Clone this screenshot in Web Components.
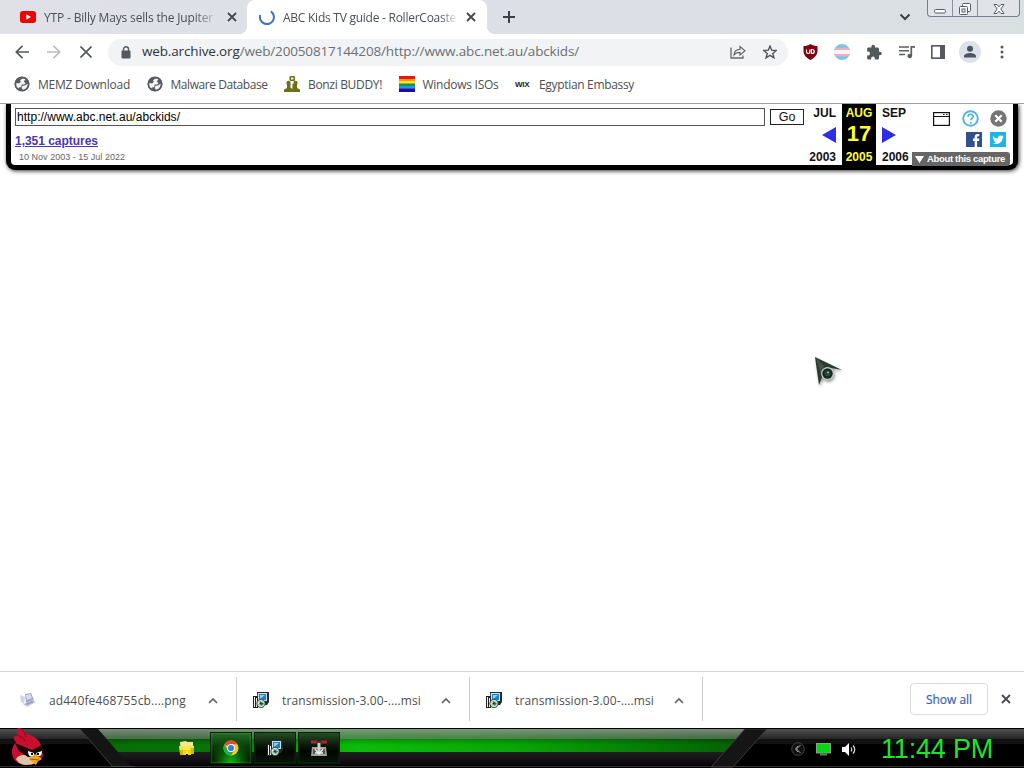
<!DOCTYPE html>
<html lang="en">
<head>
<meta charset="utf-8">
<title>ABC Kids TV guide - RollerCoaster</title>
<style>
  body {
    margin: 0;
    width: 1024px;
    height: 768px;
    overflow: hidden;
    display: flex;
    flex-direction: column;
    background: #fff;
    font: 12px "Open Sans", "Noto Sans", sans-serif;
    color: #4b4f53;
  }
  .page { flex: 1; min-height: 0; }
</style>
</head>
<body>

<tab-strip>
  <browser-tab icon="youtube" ancho="169">YTP - Billy Mays sells the Jupiter</browser-tab>
  <browser-tab icon="spinner" ancho="173" active>ABC Kids TV guide - RollerCoaste</browser-tab>
</tab-strip>

<tool-bar></tool-bar>

<bookmarks-bar>
  <book-mark icon="globe" ancho="92">MEMZ Download</book-mark>
  <book-mark icon="globe" ancho="97">Malware Database</book-mark>
  <book-mark icon="bonzi" ancho="74">Bonzi BUDDY!</book-mark>
  <book-mark icon="rainbow" ancho="76">Windows ISOs</book-mark>
  <book-mark icon="wix" ancho="95">Egyptian Embassy</book-mark>
</bookmarks-bar>

<wayback-bar></wayback-bar>
<main class="page"><mouse-pointer></mouse-pointer></main>

<download-shelf>
  <download-item icon="picture" ancho="137">ad440fe468755cb....png</download-item>
  <download-item icon="msi" ancho="139">transmission-3.00-....msi</download-item>
  <download-item icon="msi" ancho="139">transmission-3.00-....msi</download-item>
</download-shelf>

<task-bar></task-bar>

<script>
/* icons: name -> [width, height, svg content] */
const msi = `<path d="M0 4h5v12H0z" fill="#222"/><path d="M1 5h1v10H1zM3 6h1v9H3z" fill="#eee"/>
  <path d="M4 0h12v10l-2 3H5z" fill="#222b35"/><path d="M5 1h9v8H5z" fill="#d6dfe5"/><path d="M6 2h7v6H6z" fill="#1784cf"/>
  <path d="M7 3h5L7 7z" fill="#8bd2f5"/><circle cx="8" cy="11.5" r="4.2" fill="#b8cdbf" stroke="#253329" stroke-width=".8"/>
  <path d="M8 8v7M5 11h6" stroke="#fff" stroke-width=".8"/><path d="M7 9l4 2.5L8 14z" fill="#15864a"/><circle cx="7.6" cy="11.5" r="1.1" fill="#222"/>`;

const icons = {
  youtube: [16, 12, `<rect width="16" height="12" rx="3" fill="#f00000"/><path d="M6.3 3.3v5.4L11 6z" fill="#fff"/>`],
  spinner: [16, 16, `<path d="M11.800 2.300A7 7 0 1 1 1.2 6" fill="none" stroke="#3b74cf" stroke-width="2"/>`],
  close: [10, 10, `<path d="M1 1l8 8M9 1L1 9" stroke="#45484c" stroke-width="1.8"/>`],
  plus: [12, 12, `<path d="M6 0v12M0 6h12" stroke="#3c4043" stroke-width="2"/>`],
  chevron: [12, 8, `<path d="M1.5 1.5L6 6l4.500-4.500" fill="none" stroke="#3c4043" stroke-width="2"/>`],
  up: [10, 7, `<path d="M1 6l4-4 4 4" fill="none" stroke="#5f6368" stroke-width="1.7"/>`],
  back: [14, 14, `<path d="M14 7H1.500M7.500 .8L1.300 7l6.200 6.200" fill="none" stroke="#55585c" stroke-width="1.7"/>`],
  forward: [14, 14, `<path d="M0 7h12.500M6.500 .8L12.700 7l-6.200 6.200" fill="none" stroke="#bcbec1" stroke-width="1.7"/>`],
  stop: [12, 12, `<path d="M.5 .5l11 11M11.500 .5l-11 11" stroke="#55585c" stroke-width="1.7"/>`],
  lock: [10, 13, `<rect x=".5" y="4.500" width="9" height="8" rx="1" fill="#55585c"/><path d="M2.500 5V3.300a2.500 2.500 0 0 1 5 0V5" fill="none" stroke="#55585c" stroke-width="1.400"/>`],
  share: [16, 14, `<path d="M1 2.500V13h12v-2.500" fill="none" stroke="#65686c" stroke-width="1.300"/><path d="M4 10c.3-3.600 2.300-5.600 6-5.600V1.500l5 4.300-5 4.200V7.300C7.500 7.300 5.500 8 4 10z" fill="none" stroke="#65686c" stroke-width="1.200"/>`],
  star: [14, 14, `<path d="M7 1l1.700 4.200 4.500.3-3.400 2.900 1.100 4.400L7 10.400l-3.900 2.400 1.100-4.400L.8 5.500l4.500-.3z" fill="none" stroke="#515458" stroke-width="1.400"/>`],
  ublock: [15, 16, `<path d="M7.500 0C9.500 1.400 12 2 14.500 2v5c0 4-3 7-7 9-4-2-7-5-7-9V2C3 2 5.500 1.400 7.500 0z" fill="#800010"/><path d="M3.500 5.500v2.300a1.700 1.700 0 0 0 3.400 0V5.500" fill="none" stroke="#fff" stroke-width="1.200"/><path d="M8.400 5.500h.8a2 2 0 1 1 0 4h-.8z" fill="none" stroke="#fff" stroke-width="1.200"/>`],
  flag: [16, 16, `<clipPath id="c"><circle cx="8" cy="8" r="8"/></clipPath><g clip-path="url(#c)"><path d="M0 0h16v16H0z" fill="#76c8e5"/><path d="M0 3.800h16v8.400H0z" fill="#f4acc0"/><path d="M0 6h16v4H0z" fill="#f6f6f9"/></g>`],
  puzzle: [16, 16, `<path d="M14 7.700h-1V5a1.400 1.400 0 0 0-1.400-1.400H9V2.500a1.800 1.800 0 0 0-3.600 0v1.100H2.500A1.400 1.400 0 0 0 1.100 5v2.600h1a1.900 1.900 0 0 1 0 3.800h-1v2.700a1.400 1.400 0 0 0 1.400 1.400h2.600v-1a1.900 1.900 0 0 1 3.800 0v1h2.700a1.400 1.400 0 0 0 1.400-1.400v-2.800h1a1.800 1.800 0 0 0 0-3.600z" fill="#55585c"/>`],
  queue: [17, 14, `<path d="M1 2h10M1 5.700h10M1 9.400h6" stroke="#5b5e62" stroke-width="1.500"/><path d="M13.300 11V1.800H17" fill="none" stroke="#5b5e62" stroke-width="1.700"/><circle cx="11.700" cy="11" r="2.300" fill="#5b5e62"/>`],
  panel: [14, 14, `<rect x=".8" y=".8" width="12.400" height="12.400" fill="none" stroke="#55585c" stroke-width="1.600"/><path d="M9 1h4.500v12H9z" fill="#55585c"/>`],
  avatar: [22, 22, `<circle cx="11" cy="11" r="11" fill="#dee1e8"/><circle cx="11" cy="7.800" r="3" fill="#4b5462"/><path d="M5 16.500v-1.300c0-2 3.800-3.200 6-3.200s6 1.200 6 3.200v1.300z" fill="#4b5462"/>`],
  menu: [4, 14, `<g fill="#55585c"><circle cx="2" cy="2" r="1.500"/><circle cx="2" cy="7" r="1.500"/><circle cx="2" cy="12" r="1.500"/></g>`],
  globe: [16, 16, `<circle cx="8" cy="8" r="7.300" fill="#595c60"/><path d="M9 2.200L6 4.200l.8 1.600-1.300 1.400H1.800c-.6 3 .6 4.600 2 5.800l1.200-1.500 2.200-.6.5-2.300h2.500l1.300-1.400-1.700-1.600L11.600 3z" fill="#f4f5f6"/><path d="M13.800 7.500l-2.500 1.700-3 .8-.6 2 1.300 2c3-.5 5-3 4.800-6.500z" fill="#f4f5f6"/><circle cx="8" cy="8" r="6.700" fill="none" stroke="#595c60" stroke-width="1.700"/>`],
  bonzi: [16, 16, `<g fill="#6f701a"><rect x="5.500" y="0" width="5.500" height="5" rx="1.300"/><circle cx="4.500" cy="7" r="2.200"/><circle cx="11.500" cy="7" r="2.200"/><path d="M3 8h3.500v4H8V8h5v4l3 1.500V16H0v-2.500L3 12z"/></g><path d="M7 1.500h2.500v2H7z" fill="#f3f3df"/><path d="M8 6v7" stroke="#fff" stroke-width=".8"/>`],
  rainbow: [16, 16, `<path d="M0 0h16v3H0z" fill="#e01b12"/><path d="M0 3h16v2.500H0z" fill="#ff9500"/><path d="M0 5.500h16V8H0z" fill="#f5e61d"/><path d="M0 7.500h16V10H0z" fill="#16934f"/><path d="M0 10h16v2.300H0z" fill="#189de2"/><path d="M0 12.300h16V16H0z" fill="#1d09b5"/>`],
  helpme: [17, 17, `<circle cx="8.500" cy="8.500" r="7.300" fill="#fff" stroke="#50b3e0" stroke-width="1.900"/><path d="M6 6.800c0-3.200 5.200-3.200 5.200-.2 0 1.900-2.500 1.800-2.500 3.700M8.700 12v1.700" fill="none" stroke="#50b3e0" stroke-width="1.700"/>`],
  closeround: [17, 17, `<circle cx="8.500" cy="8.500" r="8.200" fill="#757575"/><path d="M5.300 5.300l6.400 6.400M11.700 5.300l-6.400 6.400" stroke="#fff" stroke-width="2.200"/>`],
  frame: [17, 14, `<rect x=".6" y=".6" width="15.800" height="12.800" fill="#fff" stroke="#111" stroke-width="1.200"/><path d="M0 4.500h17M10 2.500h1.500M13 2.500h1.500" stroke="#111" stroke-width="1.200"/>`],
  facebook: [16, 15, `<path d="M0 0h16v15H0z" fill="#31508e"/><path d="M8.700 15V9H7V6.600h1.700V5c0-2 1-3 3-3h1.600v2.300h-1.100c-.9 0-1.100.4-1.100 1.100v1.200h2.200L13 9h-1.900v6z" fill="#fff"/>`],
  twitter: [16, 15, `<path d="M0 0h16v15H0z" fill="#20b5e8"/><path d="M3 4.200c1.500 1.600 3 2.200 4.900 2.300C7.500 4 10.200 2.700 11.900 4l1.600-.5-.8 1.300 1.100.1-1.200 1.200c0 5.200-5.600 7.200-9.800 5 1.400 0 2.200-.2 3.200-.9-1.100-.2-1.800-.8-2-1.600h.9C3.700 8.100 3.100 7.300 3.200 6.500l.8.200C3 5.900 2.600 5.100 3 4.200z" fill="#fff"/>`],
  left: [14, 16, `<path d="M14 0v16L0 8z" fill="#2d2de8"/>`],
  right: [14, 16, `<path d="M0 0v16l14-8z" fill="#2d2de8"/>`],
  down: [9, 7, `<path d="M0 0h9L4.500 7z" fill="#fff"/>`],
  picture: [16, 16, `<path d="M0 3l5 2-1 7 2 1-5-3z" fill="#d3d6e0"/><path d="M5 2l6-1 3 7-8 3z" fill="#a4a8c4"/><path d="M6 3l4-1 2 4-5 2z" fill="#d8dcec"/><path d="M3 12l10-4 3 2-9 5z" fill="#c9cddc"/><path d="M5 12l7-3 2 1-7 3z" fill="#9599b2"/>`],
  msi: [16, 16, msi],
  folder: [16, 16, `<path d="M1 2l6-1 1 1h6v12H2z" fill="#f4e797"/><path d="M0 6h15v8H1z" fill="#eee07c"/><path d="M3 8c0-3 9-3 9 0v7H9v-4H7v4H3z" fill="#f3d800"/><path d="M4 7l4-2 3 2v3H4z" fill="#ffec4d"/><path d="M1 10h3v5H1zM12 8h3v6h-3z" fill="#cbb61d"/>`],
  chrome: [16, 16, `<circle cx="8" cy="8" r="7.500" fill="#fbc817"/><path d="M8 8L1.500 4.200A7.500 7.500 0 0 1 14.500 4.300H8z" fill="#e94436"/><path d="M1.500 4.200A7.500 7.500 0 0 0 8 15.500l3.200-5.600-6.400 0z" fill="#2ca74b"/><circle cx="8" cy="8" r="4" fill="#fff"/><circle cx="8" cy="8" r="3.100" fill="#397ee8"/>`],
  transmission: [16, 16, `<path d="M1 7h14l1 9H0z" fill="#a2a2a2"/><path d="M2 9h12v5H2z" fill="#555"/><path d="M6.500 1h3v13h-3z" fill="#d0d0d0"/><path d="M4 9l4 5 4-5M4 13h8" fill="none" stroke="#eee" stroke-width="1.300"/><path d="M0 .5h6v3H0zM10 .5h6v3h-6z" fill="#c51b24"/><path d="M5 1h6v2H5z" fill="#3a3a3a"/>`],
  traymore: [14, 14, `<circle cx="7" cy="7" r="6.300" fill="#101010" stroke="#444" stroke-width="1"/><path d="M9.500 3L5.500 7l4 4M7 4L4.500 7 7 10" fill="none" stroke="#aaa" stroke-width="1"/>`],
  monitor: [15, 13, `<rect x=".5" y=".5" width="14" height="9.500" fill="#07d51a" stroke="#7fa87f" stroke-width="1"/><path d="M4 10.500h7v2H4z" fill="#5e855e"/>`],
  speaker: [15, 13, `<path d="M0 4h3l4-4v13L3 9H0z" fill="#fff"/><path d="M9 4.500q1.500 2 0 4M11 2.500q3.500 4 0 8" fill="none" stroke="#ddd" stroke-width="1.200"/>`],
  bird: [34, 38, `<path d="M5 14C1 10 3 6 8 8 4 3 6 0 8 0c3 0 6 3 7 6 5 0 12 4 15 11 2 5 3 10 1 13-3 5-9 7-15 7C6 37 1 31 1 24c0-4 1-7 4-10z" fill="#c90f30"/>
    <path d="M8 8c3 1 5 2 6 5M9 1c3 2 5 4 6 8" fill="none" stroke="#86061f" stroke-width="1"/>
    <path d="M5 31c2-4 8-5 14-3l8 4c-3 4-7 5-12 5-4 0-8-2-10-6z" fill="#dcc6a8"/>
    <path d="M4 15l17 7 10-5 1 8-3 4H17L8 23z" fill="#15070a"/><path d="M17 23l6 2v3c-4 2-6-1-6-5zM25 25l6-2c0 4-1 6-5 5z" fill="#fff"/><path d="M20 25h2v2h-2zM26 25h2v2h-2z"/>
    <path d="M18 31l6-5 7 5-4 2-2 4-4-3z" fill="#f1a51d"/><path d="M19 31l9 1" stroke="#9a5c10"/>`]
};

function crearPlantilla(html) {
  const t = document.createElement("template");
  t.innerHTML = html;
  return t;
}

// common base: clones the template into an open shadow root
class Base extends HTMLElement {
  constructor() {
    super();
    this.attachShadow({ mode: "open" });
    this.shadowRoot.appendChild(crearPlantilla(this.html()).content.cloneNode(true));
  }
}

class UiIcon extends Base {
  html() {
    const [w, h, body] = icons[this.getAttribute("name")];
    return `<style>:host{display:inline-flex;flex:none}svg{display:block}</style>
      <svg width="${w}" height="${h}" viewBox="0 0 ${w} ${h}">${body}</svg>`;
  }
}

/* a line of text that spreads its letters to take the width given in "w" */
class FitText extends Base {
  html() {
    return `<style>:host{display:block;flex:none;white-space:pre}span{display:inline-block;text-decoration:inherit}</style><span><slot></slot></span>`;
  }
  connectedCallback() {
    const span = this.shadowRoot.querySelector("span");
    const w = Number(this.getAttribute("w"));
    const natural = span.getBoundingClientRect().width;
    span.style.letterSpacing = (w - natural) / this.textContent.length + "px";
    this.style.width = w + "px";
  }
}

class TabStrip extends Base {
  html() {
    return `<style>
      :host{display:flex;height:34px;flex:none;background:linear-gradient(90deg,#dfe1e7,#dcdfe6 70%,#d9e0e2)}
      .new{width:44px;display:flex;align-items:center;justify-content:center}
      .space{flex:1}
      .list{margin-right:16px;display:flex;align-items:center}
      .win{display:flex;height:16px;width:91px;margin-right:4px;border:1px solid #777d86;border-top:0;border-radius:0 0 4px 4px;box-sizing:content-box;background:#e0e4e9}
      .win div{display:flex;align-items:center;justify-content:center;border-left:1px solid #8a8f98;width:24px;padding-top:1px}
      .win div:first-child{border:0}.win div:last-child{flex:1}
    </style>
    <slot></slot><div class="new"><ui-icon name="plus"></ui-icon></div><div class="space"></div>
    <div class="list"><ui-icon name="chevron"></ui-icon></div>
    <div class="win">
      <div><svg width="14" height="14"><rect x="1.500" y="7.500" width="11" height="3.500" rx="1.200" fill="#fff" stroke="#555b64"/></svg></div>
      <div><svg width="14" height="14"><rect x="4.500" y="1.500" width="8" height="8" rx="1" fill="#fff" stroke="#555b64"/><rect x="1.500" y="4.500" width="8" height="8" rx="1" fill="#fff" stroke="#555b64"/><rect x="4" y="7" width="3" height="3" fill="none" stroke="#555b64"/></svg></div>
      <div><svg width="14" height="14"><path d="M2 2.500h3l2 2.300 2-2.300h3L8.800 7l3.200 4.500H9L7 9.200l-2 2.300H2L5.200 7z" fill="#fff" stroke="#555b64"/></svg></div>
    </div>`;
  }
}

class BrowserTab extends Base {
  html() {
    return `<style>
      :host{display:flex;align-items:center;width:247px;height:34px;box-sizing:border-box;padding:0 10px 0 20px;position:relative}
      :host([active]){width:240px;padding:0 11px 0 12px;background:#fff;border-radius:8px 8px 0 0}
      .txt{flex:1;overflow:hidden;margin:0 8px;-webkit-mask-image:linear-gradient(90deg,#000 86%,transparent)}
      :host([active]) .txt{-webkit-mask-image:linear-gradient(90deg,#000 90%,transparent)}
      /* curved feet at both sides of the active tab */
      :host([active])::before,:host([active])::after{content:"";position:absolute;bottom:0;width:8px;height:8px}
      :host([active])::before{left:-8px;background:radial-gradient(circle at 0 0,transparent 8px,#fff 8px)}
      :host([active])::after{right:-8px;background:radial-gradient(circle at 100% 0,transparent 8px,#fff 8px)}
    </style>
    <ui-icon name="${this.getAttribute("icon")}"></ui-icon>
    <div class="txt"><fit-text w="${this.getAttribute("ancho")}">${this.textContent}</fit-text></div>
    <ui-icon name="close"></ui-icon>`;
  }
}

class ToolBar extends Base {
  html() {
    const cell = n => `<div class="cell"><ui-icon name="${n}"></ui-icon></div>`;
    return `<style>
      :host{display:flex;align-items:center;height:36px;flex:none;padding:0 6px;background:#fff}
      .cell{width:32px;height:32px;display:flex;align-items:center;justify-content:center;flex:none}
      .url{display:flex;align-items:center;flex:1;height:27px;margin:0 6px;padding:0 2px;border-radius:14px;background:#f1f3f5;font-size:13.500px;color:#6c7074}
      .url b{font-weight:400;color:#303438}
      .url fit-text{margin-top:-2px}
      .space{flex:1}
    </style>
    ${["back", "forward", "stop"].map(cell).join("")}
    <div class="url">${cell("lock")}<fit-text w="437"><b>web.archive.org</b>/web/20050817144208/http://www.abc.net.au/abckids/</fit-text>
      <div class="space"></div>${cell("share")}${cell("star")}</div>
    ${["ublock", "flag", "puzzle", "queue", "panel", "avatar", "menu"].map(cell).join("")}`;
  }
}

class BookmarksBar extends Base {
  html() {
    return `<style>:host{display:flex;align-items:center;gap:16.500px;height:34px;flex:none;box-sizing:border-box;padding:0 14px 5px;border-bottom:1px solid #a3a3a3}</style><slot></slot>`;
  }
}

class BookMark extends Base {
  html() {
    const icon = this.getAttribute("icon");
    // the wix favicon is only its name
    const img = icon == "wix" ? `<span class="wix">WIX</span>` : `<ui-icon name="${icon}"></ui-icon>`;
    return `<style>
      :host{display:flex;align-items:center;gap:8px}
      .wix{width:16px;font:bold 8px "Liberation Sans",sans-serif;letter-spacing:-.3px;color:#222}
    </style>${img}<fit-text w="${this.getAttribute("ancho")}">${this.textContent}</fit-text>`;
  }
}

class WaybackBar extends Base {
  html() {
    return `<style>
      :host{display:flex;flex:none;box-sizing:border-box;width:1012px;height:66px;margin-left:6px;padding:0 3px 0 4px;border:5px solid #000;border-top:0;border-radius:0 0 9px 9px;background:#fff;box-shadow:1px 1px 4px #333;font-family:"Liberation Sans",sans-serif;color:#111;clip-path:inset(0 -8px -8px -8px)}
      .left{width:750px;padding-top:4px}
      .field{height:18px;box-sizing:border-box;border:1px solid #555;padding-left:1px;font-size:12px;line-height:16px;color:#000}
      .cap{font-size:12px;line-height:14px;font-weight:bold;color:#4a36b8;text-decoration:underline;margin-top:8px}
      .cap fit-text{text-decoration:inherit}
      .dates{font-size:9px;line-height:12px;color:#666;margin:3px 0 0 4px}
      .go{width:34px;height:16px;box-sizing:border-box;border:1px solid #222;margin:5px 4px 0 5px;font-size:12.500px;line-height:14px;text-align:center}
      .col{display:grid;grid-template-rows:17px 28px 15px;align-items:center;align-content:start;font-size:12px;font-weight:bold;line-height:14px}
      .prev{width:28px;justify-items:end;margin-right:6px}
      .now{width:34px;justify-items:center;background:#000;color:#ff3}
      .now b{font-size:22px;line-height:24px;margin-bottom:2px}
      .next{width:30px;justify-items:start;margin-left:6px}
      .end{display:flex;flex-direction:column;align-items:flex-end;width:98px}
      .row{display:flex;align-items:center;padding-right:3px;height:17px;margin-top:6px}
      .row+.row{margin-top:5px;height:15px;gap:8px;padding-right:4px}
      .about{display:flex;align-items:center;gap:3px;height:14px;width:98px;box-sizing:border-box;padding-left:3px;margin-top:5px;background:#666;border-radius:0 3px 3px 0;color:#fff;font-size:9.500px;font-weight:bold;line-height:14px}
    </style>
    <div class="left">
      <div class="field"><fit-text w="163">http://www.abc.net.au/abckids/</fit-text></div>
      <div class="cap"><fit-text w="83">1,351 captures</fit-text></div>
      <div class="dates"><fit-text w="106">10 Nov 2003 - 15 Jul 2022</fit-text></div>
    </div>
    <div class="go">Go</div>
    <div class="col prev"><span>JUL</span><ui-icon name="left"></ui-icon><span>2003</span></div>
    <div class="col now"><span>AUG</span><b>17</b><span>2005</span></div>
    <div class="col next"><span>SEP</span><ui-icon name="right"></ui-icon><span>2006</span></div>
    <div class="end">
      <div class="row"><ui-icon name="frame" style="margin-right:12px"></ui-icon><ui-icon name="helpme" style="margin-right:11px"></ui-icon><ui-icon name="closeround"></ui-icon></div>
      <div class="row"><ui-icon name="facebook"></ui-icon><ui-icon name="twitter"></ui-icon></div>
      <div class="about"><ui-icon name="down"></ui-icon><fit-text w="78">About this capture</fit-text></div>
    </div>`;
  }
}

/* custom cursor, it floats over the page */
class MousePointer extends Base {
  html() {
    return `<style>:host{position:absolute;left:812px;top:354px}svg{display:block;filter:drop-shadow(1px 2px 1.500px #0006)}</style>
    <svg width="34" height="36" viewBox="0 0 34 36"><path d="M3 3l27 13-11-2-7 4-5 13z" fill="#2b3a32"/><path d="M4 4l8 8-3 8z" fill="#46524b"/>
      <circle cx="15.500" cy="19.500" r="6.500" fill="#c6cdc8"/><circle cx="15.500" cy="19.500" r="5.200" fill="#16281f"/><circle cx="15.500" cy="19.500" r="3" fill="#234a38"/><circle cx="16" cy="18.500" r="1" fill="#8fb9a3"/></svg>`;
  }
}

class DownloadShelf extends Base {
  html() {
    return `<style>
      :host{display:flex;align-items:center;height:57px;flex:none;box-sizing:border-box;border-top:1px solid #d7d7d7;background:#fff;padding:0 13px 2px 0}
      .space{flex:1}
      .all{width:78px;height:32px;box-sizing:border-box;border:1px solid #dadce0;border-radius:4px;display:flex;align-items:center;justify-content:center;color:#3965b5;margin-right:13px;font-size:12px;-webkit-text-stroke:.2px #3965b5}
    </style>
    <slot></slot><div class="space"></div><div class="all"><fit-text w="46">Show all</fit-text></div><ui-icon name="close"></ui-icon>`;
  }
}

class DownloadItem extends Base {
  html() {
    return `<style>
      :host{display:flex;align-items:center;width:233px;height:44px;box-sizing:border-box;padding:2px 18px 0 16px;border-right:1px solid #ccc}
      :host(:first-child){width:237px;padding-left:20px}
      fit-text{margin-left:13px}
      .space{flex:1}
    </style>
    <ui-icon name="${this.getAttribute("icon")}"></ui-icon><fit-text w="${this.getAttribute("ancho")}">${this.textContent}</fit-text>
    <div class="space"></div><ui-icon name="up"></ui-icon>`;
  }
}

class TaskBar extends Base {
  html() {
    return `<style>
      :host{display:flex;align-items:center;position:relative;height:40px;flex:none;background:#000;overflow:hidden}
      .bg{position:absolute;left:0;top:0}
      .items{position:relative;display:flex;align-items:center;width:100%;height:40px}
      .start{width:165px;padding-left:11px;box-sizing:border-box;align-self:flex-start;height:38px}
      .btn{width:44px;height:40px;display:flex;align-items:center;justify-content:center}
      .btn div{width:42px;height:32px;box-sizing:border-box;border:1px solid #020;display:flex;align-items:center;justify-content:center;background:linear-gradient(#244d24,#0b190b 40%,#030603 60%,#081408);box-shadow:inset 0 0 1px #4a704a}
      .btn .on{background:radial-gradient(ellipse at 50% 105%,#12b812,#075a08 38%,transparent 68%),linear-gradient(#276b28,#093b09 45%,#031303);box-shadow:inset 0 0 2px #36bd36}
      .space{flex:1}
      .tray{display:flex;align-items:center;gap:11px;margin:2px 24px 0 0}
      .clock{font:27px "Liberation Sans",sans-serif;color:#1de52a;margin:2px 31px 0 0;line-height:32px}
    </style>
    <svg class="bg" width="1024" height="40">
      <defs>
        <linearGradient id="g" x1="0" x2="0" y1="0" y2="1"><stop offset="0" stop-color="#505050"/><stop offset="1" stop-color="#252525"/></linearGradient>
        <linearGradient id="v"><stop offset="0" stop-color="#066d05"/><stop offset=".18" stop-color="#077508"/><stop offset=".4" stop-color="#0abd08"/><stop offset=".65" stop-color="#08a507"/><stop offset="1" stop-color="#045f04"/></linearGradient>
        <linearGradient id="d" x1="0" x2="0" y1="0" y2="1"><stop offset=".35" stop-color="#000" stop-opacity=".3"/><stop offset=".7" stop-color="#000" stop-opacity="0"/></linearGradient>
        <linearGradient id="t" x1="0" x2="0" y1="0" y2="1"><stop offset="0" stop-color="#aaa" stop-opacity=".7"/><stop offset="1" stop-color="#888" stop-opacity=".5"/></linearGradient>
        <linearGradient id="s" x1="0" x2="0" y1="0" y2="1"><stop offset="0" stop-color="#1c211c"/><stop offset=".4" stop-color="#19131b"/><stop offset="1" stop-color="#060406"/></linearGradient>
      </defs>
      <path d="M0 1h1024v10H0z" fill="url(#g)"/>
      <path d="M0 11h1024v5H0z" fill="#111"/>
      <path d="M80 1h20l34 38h-22z" fill="#141414"/><path d="M80 1l33 38M100 2l34 37" stroke="#3b3b3b" fill="none"/>
      <path d="M98 1h647l-20 23H118z" fill="url(#v)"/><path d="M98 1h647l-20 23H118z" fill="url(#d)"/>
      <path d="M98 1h647l-9 10H107z" fill="url(#t)"/>
      <path d="M118 24h607l-13 14H131z" fill="url(#s)"/>
      <path d="M745 1h22l-34 38h-22z" fill="#151515" stroke="#3d3d3d"/>
      <path d="M108 38.500h604" stroke="#4c484d"/><path d="M134 38.500H1024M0 38.500h112" stroke="#333"/>
      <path d="M0 .5h1024" stroke="#000"/>
    </svg>
    <div class="items">
      <div class="start"><ui-icon name="bird"></ui-icon></div>
      <div class="btn"><ui-icon name="folder"></ui-icon></div>
      <div class="btn"><div class="on"><ui-icon name="chrome"></ui-icon></div></div>
      <div class="btn"><div><ui-icon name="msi"></ui-icon></div></div>
      <div class="btn"><div><ui-icon name="transmission"></ui-icon></div></div>
      <div class="space"></div>
      <div class="tray"><ui-icon name="traymore"></ui-icon><ui-icon name="monitor"></ui-icon><ui-icon name="speaker"></ui-icon></div>
      <div class="clock"><fit-text w="112">11:44 PM</fit-text></div>
    </div>`;
  }
}

customElements.define("tab-strip", TabStrip);
customElements.define("browser-tab", BrowserTab);
customElements.define("tool-bar", ToolBar);
customElements.define("bookmarks-bar", BookmarksBar);
customElements.define("book-mark", BookMark);
customElements.define("wayback-bar", WaybackBar);
customElements.define("mouse-pointer", MousePointer);
customElements.define("download-shelf", DownloadShelf);
customElements.define("download-item", DownloadItem);
customElements.define("task-bar", TaskBar);
customElements.define("ui-icon", UiIcon);
// last one: it measures itself inside the others
customElements.define("fit-text", FitText);
</script>
</body>
</html>
